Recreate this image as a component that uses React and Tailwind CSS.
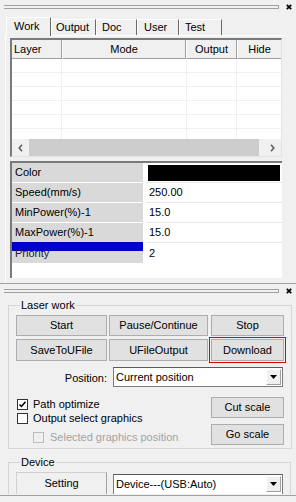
import React from 'react';

function Gripper() {
  return (
    <div className="flex h-[13px] shrink-0 items-start pl-[4px]">
      <div className="mt-[5px] h-[4px] w-[275px] border-y border-r border-[#a0a0a0]" />
      <svg className="ml-[7px] mt-[4px]" width="6" height="6" viewBox="0 0 6 6">
        <path d="M0.8 0.8 L5.2 5.2 M5.2 0.8 L0.8 5.2" stroke="#000" strokeWidth="1.7" />
      </svg>
    </div>
  );
}

function Btn({ children, className = '' }) {
  return (
    <div className={`flex items-center justify-center border border-[#adadad] bg-[#e1e1e1] ${className}`}>
      {children}
    </div>
  );
}

function Check({ checked, disabled }) {
  return (
    <div
      className={`flex h-[11px] w-[11px] shrink-0 items-center justify-center border ${
        disabled ? 'border-[#bcbcbc] bg-[#f0f0f0]' : 'border-[#333333] bg-white'
      }`}
    >
      {checked && (
        <svg width="9" height="9" viewBox="0 0 9 9">
          <path d="M1.5 4.5 L3.5 6.5 L7.5 1.8" stroke="#000" strokeWidth="1.5" fill="none" />
        </svg>
      )}
    </div>
  );
}

function Arrow() {
  return (
    <svg width="7" height="4" viewBox="0 0 7 4">
      <polygon points="0,0 7,0 3.5,4" fill="#000" />
    </svg>
  );
}

function Combo({ text, className = '' }) {
  return (
    <div className={`flex w-[170px] border border-[#7a7a7a] border-t-[#5a5a5a] bg-white ${className}`}>
      <div className="flex flex-1 items-center pl-[2px]">{text}</div>
      <div className="m-[1px] flex h-[16px] w-[15px] items-center justify-center border border-l-white border-t-white border-r-[#a0a0a0] border-b-[#a0a0a0] bg-[#f0f0f0]">
        <Arrow />
      </div>
    </div>
  );
}

export default function App() {
  const rows = [0, 1, 2, 3, 4, 5];
  return (
    <div className="h-[502px] w-[296px] overflow-hidden bg-[#f0f0f0] font-['Liberation_Sans',Arial,sans-serif] text-[11px] leading-[13px] text-black">
      {/* Top panel */}
      <div className="flex h-[284px] flex-col border-b border-[#a0a0a0]">
        <Gripper />
        {/* Tabs */}
        <div className="flex h-[22px] shrink-0 items-end pl-[6px]">
          <div className="relative z-10 -mb-px h-[19px] w-[45px] border-l border-r border-t border-l-white border-r-[#696969] border-t-white bg-[#f0f0f0] pl-[7px] pt-[2px]">
            Work
          </div>
          <div className="h-[16px] w-[45px] border-l border-r border-t border-l-white border-r-[#696969] border-t-white pl-[4px] pt-[1px]">
            Output
          </div>
          <div className="h-[16px] w-[41px] border-l border-r border-t border-l-white border-r-[#696969] border-t-white pl-[5px] pt-[1px]">
            Doc
          </div>
          <div className="h-[16px] w-[42px] border-l border-r border-t border-l-white border-r-[#696969] border-t-white pl-[6px] pt-[1px]">
            User
          </div>
          <div className="h-[16px] w-[43px] border-l border-r border-t border-l-white border-r-[#696969] border-t-white pl-[5px] pt-[1px]">
            Test
          </div>
        </div>
        {/* Tab page */}
        <div className="ml-[5px] flex w-[281px] flex-1 flex-col border-l border-t border-white pl-[4px] pt-[2px]">
          {/* List */}
          <div className="w-[272px] border-b border-l-2 border-r border-t-2 border-b-[#e3e3e3] border-l-[#7a7a7a] border-r-[#e3e3e3] border-t-[#7a7a7a] bg-white">
            <div className="flex h-[19px] bg-[#f0f0f0]">
              <div className="flex w-[50px] items-center border-b border-r border-b-[#a0a0a0] border-r-[#a0a0a0] pl-[2px]">Layer</div>
              <div className="flex w-[124px] items-center justify-center border-b border-l border-r border-b-[#a0a0a0] border-l-white border-r-[#a0a0a0]">Mode</div>
              <div className="flex w-[51px] items-center justify-center border-b border-l border-r border-b-[#a0a0a0] border-l-white border-r-[#a0a0a0]">Output</div>
              <div className="flex w-[44px] items-center justify-center border-b border-l border-b-[#a0a0a0] border-l-white">Hide</div>
            </div>
            <div className="h-[80px] overflow-hidden">
              {rows.map((r) => (
                <div key={r} className="flex h-[14px] border-b border-[#f0f0f0]">
                  <div className="w-[50px] border-r border-[#f0f0f0]" />
                  <div className="w-[125px] border-r border-[#f0f0f0]" />
                  <div className="w-[50px] border-r border-[#f0f0f0]" />
                  <div className="flex-1" />
                </div>
              ))}
            </div>
            <div className="flex h-[17px] bg-[#f0f0f0]">
              <div className="flex w-[17px] items-center justify-center">
                <svg width="5" height="8" viewBox="0 0 5 8">
                  <path d="M4 0.7 L1.2 4 L4 7.3" stroke="#606060" strokeWidth="1.6" fill="none" />
                </svg>
              </div>
              <div className="w-[230px] bg-[#cdcdcd]" />
              <div className="flex flex-1 items-center justify-end pr-[6px]">
                <svg width="5" height="8" viewBox="0 0 5 8">
                  <path d="M1 0.7 L3.8 4 L1 7.3" stroke="#606060" strokeWidth="1.6" fill="none" />
                </svg>
              </div>
            </div>
          </div>
          {/* Property grid */}
          <div className="mt-[4px] h-[117px] w-[272px] border-l-2 border-t-2 border-l-[#7a7a7a] border-t-[#7a7a7a] bg-white">
            <div className="flex h-[20px]">
              <div className="flex w-[131px] items-center border-b border-white bg-[#d9d9d9] pl-[3px]">Color</div>
              <div className="ml-[3px] flex-1 border-b border-[#e8e8e8] px-[2px] pt-[2px]">
                <div className="h-[16px] bg-black" />
              </div>
            </div>
            <div className="flex h-[20px]">
              <div className="flex w-[131px] items-center border-b border-white bg-[#d9d9d9] pl-[3px]">Speed(mm/s)</div>
              <div className="ml-[3px] flex flex-1 items-center border-b border-[#e8e8e8] pl-[3px]">250.00</div>
            </div>
            <div className="flex h-[20px]">
              <div className="flex w-[131px] items-center border-b border-white bg-[#d9d9d9] pl-[3px]">MinPower(%)-1</div>
              <div className="ml-[3px] flex flex-1 items-center border-b border-[#e8e8e8] pl-[3px]">15.0</div>
            </div>
            <div className="flex h-[20px]">
              <div className="flex w-[131px] items-center border-b border-[#0000c8] bg-[#d9d9d9] pl-[3px]">MaxPower(%)-1</div>
              <div className="ml-[3px] flex flex-1 items-center border-b border-[#e8e8e8] pl-[3px]">15.0</div>
            </div>
            <div className="flex h-[20px]">
              <div className="flex w-[131px] items-center bg-[#d9d9d9] bg-[linear-gradient(to_bottom,#0000c8_0px,#0000c8_8px,#d9d9d9_8px)] pl-[3px] text-[#1a1a3a]">Priority</div>
              <div className="ml-[3px] flex flex-1 items-center pl-[3px]">2</div>
            </div>
          </div>
        </div>
      </div>

      {/* Bottom panel */}
      <div className="h-[212px] border-b border-[#a0a0a0]">
        <div className="h-[210px] overflow-hidden">
          <div className="flex h-[14px] items-start pl-[4px]">
            <div className="mt-[5px] h-[4px] w-[275px] border-y border-r border-[#a0a0a0]" />
            <svg className="ml-[7px] mt-[4px]" width="6" height="6" viewBox="0 0 6 6">
              <path d="M0.8 0.8 L5.2 5.2 M5.2 0.8 L0.8 5.2" stroke="#000" strokeWidth="1.7" />
            </svg>
          </div>

          <fieldset className="ml-[8px] w-[281px] border border-[#d5d5d5] px-[7px] pb-[3px]">
            <legend className="ml-[4px] px-[1px] leading-[14px]">Laser work</legend>
            <div className="flex pt-[3px]">
              <Btn className="h-[21px] w-[91px]">Start</Btn>
              <Btn className="ml-[2px] h-[21px] w-[99px]">Pause/Continue</Btn>
              <Btn className="ml-[3px] h-[21px] w-[73px]">Stop</Btn>
            </div>
            <div className="mt-[3px] flex">
              <Btn className="h-[22px] w-[91px]">SaveToUFile</Btn>
              <Btn className="ml-[2px] h-[22px] w-[99px]">UFileOutput</Btn>
              <Btn className="ml-[3px] h-[22px] w-[73px] outline outline-1 outline-offset-[1px] outline-[#e00000]">Download</Btn>
            </div>
            <div className="mt-[6px] flex h-[20px]">
              <div className="flex w-[91px] items-center justify-end pt-[3px]">Position:</div>
              <Combo text="Current position" className="ml-[6px]" />
            </div>
            <div className="mt-[10px] flex">
              <div className="flex flex-1 flex-col">
                <div className="flex h-[14px] items-center pl-[1px]">
                  <Check checked />
                  <span className="ml-[5px]">Path optimize</span>
                </div>
                <div className="flex h-[14px] items-center pl-[1px]">
                  <Check />
                  <span className="ml-[5px]">Output select graphics</span>
                </div>
                <div className="mt-[5px] flex h-[14px] items-center pl-[17px]">
                  <Check disabled />
                  <span className="ml-[6px] text-[#a3a3a3]">Selected graphics position</span>
                </div>
              </div>
              <div className="flex w-[73px] flex-col">
                <Btn className="h-[21px]">Cut scale</Btn>
                <Btn className="mt-[6px] h-[21px]">Go scale</Btn>
              </div>
            </div>
          </fieldset>

          <fieldset className="ml-[8px] mt-[6px] w-[281px] border border-[#d5d5d5] px-[7px]">
            <legend className="ml-[4px] px-[1px] leading-[14px]">Device</legend>
            <div className="flex pt-[3px]">
              <div className="flex h-[26px] w-[91px] items-start justify-center border border-[#d0d0d0] border-r-[#a0a0a0] bg-[#f0f0f0] pt-[4px]">
                Setting
              </div>
              <div className="ml-[6px] mt-[2px] flex h-[24px] w-[170px] items-start border border-[#7a7a7a] border-t-[#5a5a5a] bg-white">
                <div className="flex h-[18px] flex-1 items-center pl-[2px]">Device---(USB:Auto)</div>
                <div className="m-[1px] flex h-[16px] w-[15px] items-center justify-center border border-l-white border-t-white border-r-[#a0a0a0] border-b-[#a0a0a0] bg-[#f0f0f0]">
                  <Arrow />
                </div>
              </div>
            </div>
          </fieldset>
        </div>
      </div>
    </div>
  );
}
